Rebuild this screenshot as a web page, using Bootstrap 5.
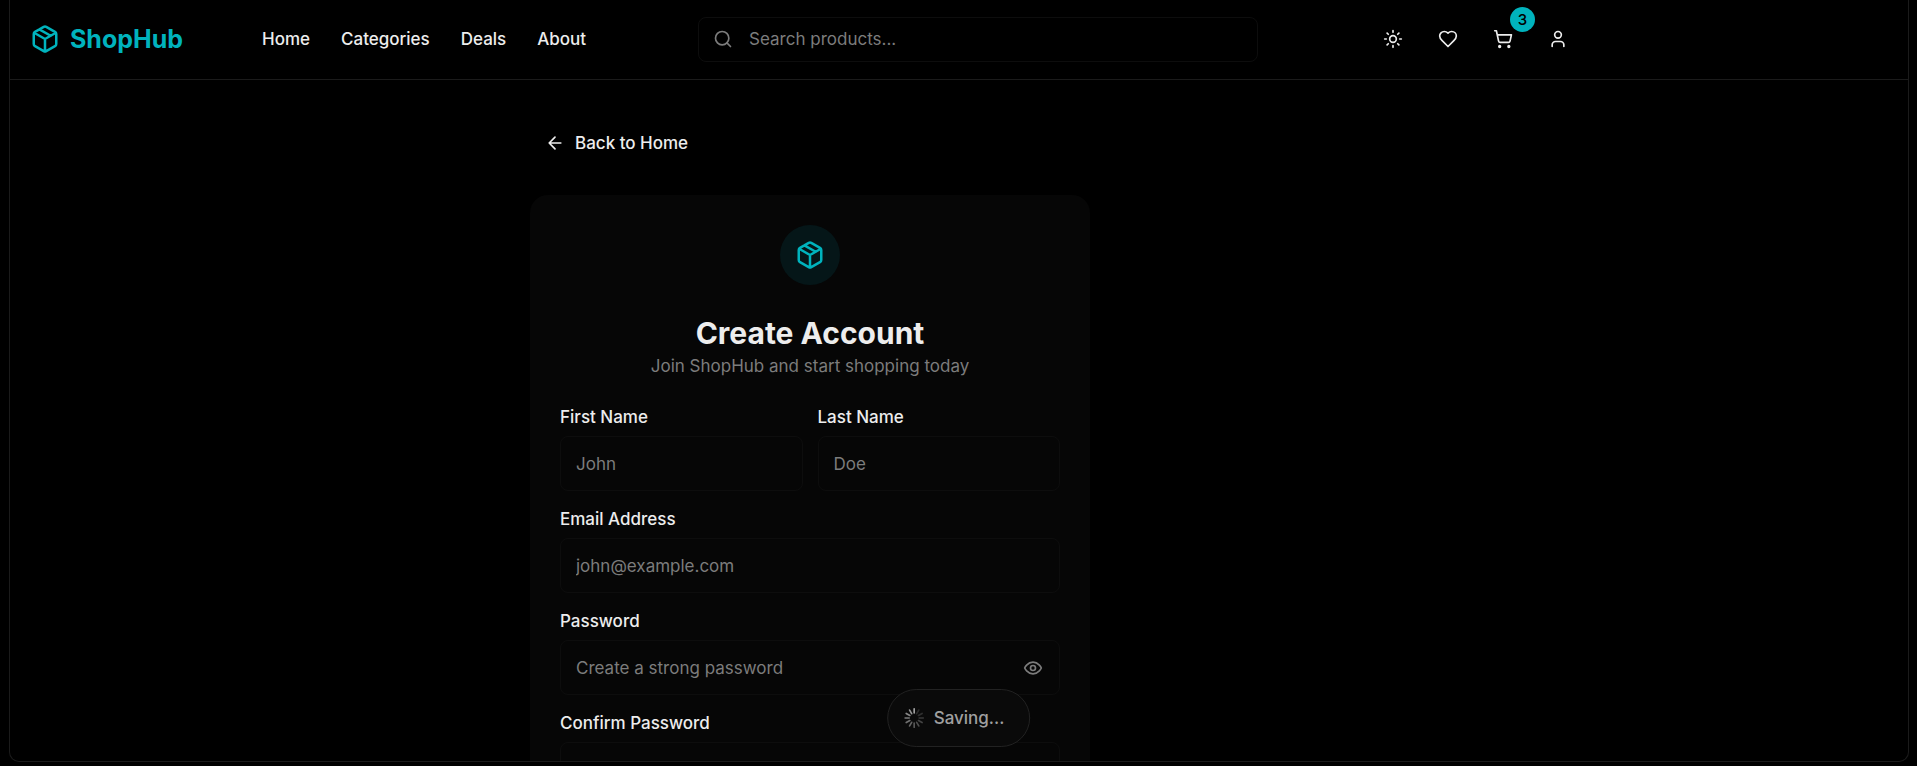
<!DOCTYPE html>
<html lang="en" data-bs-theme="dark">
<head>
<meta charset="utf-8">
<meta name="viewport" content="width=device-width, initial-scale=1">
<title>ShopHub – Create Account</title>
<link href="https://cdn.jsdelivr.net/npm/bootstrap@5.3.0/dist/css/bootstrap.min.css" rel="stylesheet">
<style>
  :root { --brand: #00b3bd; --ink: #ededed; --muted: #7c7c7c; --line: #1b1b1b; --field: #0d0d0d; }
  body { background: #000; color: var(--ink); font-family: Inter, "Liberation Sans", sans-serif; font-size: 17px; line-height: 24px; }
  svg { display: block; fill: none; stroke: currentColor; stroke-width: 2; stroke-linecap: round; stroke-linejoin: round; flex: none; }
  .app-frame { height: 100vh; padding: 0 8px 4px 9px; overflow: hidden; }
  .app-shell { border: 1px solid var(--line); border-top: 0; border-radius: 0 0 10px 10px; overflow: hidden; height: 100%; }
  .app-header { border-bottom: 1px solid var(--line); }
  .app-wide { max-width: 1600px; }
  .app-bar { height: 78px; margin-bottom: 1px; padding: 0 30px 0 20px; }
  .brand-name { font-size: 25px; font-weight: 700; color: var(--brand); }
  .brand-link { color: var(--brand); gap: 10px; width: 232px; }
  .top-links { gap: 31px; }
  .tools { gap: 10px; }
  .top-links a, .back-link { color: var(--ink); font-weight: 500; text-decoration: none; }
  .search-box { width: 560px; }
  .search-box svg { position: absolute; left: 15px; top: 12px; color: var(--muted); pointer-events: none; }
  .form-control, .form-control:focus { background: transparent; border: 1px solid var(--field); border-radius: 8px; color: var(--ink); font-size: 17px; height: 55px; padding: 0 15px; }
  .form-control::placeholder { color: var(--muted); opacity: 1; }
  .search-box .form-control { height: 45px; padding-left: 50px; }
  .icon-btn { width: 45px; height: 45px; padding: 0; border: 0; color: var(--ink); display: flex; align-items: center; justify-content: center; position: relative; }
  .cart-count { position: absolute; top: -10px; right: -10px; width: 25px; height: 25px; border-radius: 50%; background: var(--brand); color: #000; font-size: 15px; line-height: 25px; font-weight: 500; }
  .signup { width: 560px; max-width: 100%; padding-top: 40px; }
  .back-link { height: 45px; padding: 0 15px; gap: 10px; margin-bottom: 30px; }
  .panel { background: #060606; border-radius: 18px; padding: 30px; }
  .panel-mark { width: 60px; height: 60px; border-radius: 50%; background: #051618; color: var(--brand); }
  .panel h1 { color: var(--ink); font-size: 30px; line-height: 38px; font-weight: 700; margin: 29px 0 0; }
  .panel-sub { color: var(--muted); line-height: 28px; margin-bottom: 28px; }
  .fields { display: flex; flex-direction: column; gap: 19px; }
  .field-pair { gap: 15px; }
  .form-label { display: block; font-weight: 500; line-height: 18px; margin-bottom: 10px; }
  .eye-btn { position: absolute; right: 5px; top: 5px; color: var(--muted); }
  .save-pill { position: fixed; left: 50%; bottom: 19px; transform: translateX(-50%); height: 58px; padding: 0 25px 0 16px; gap: 10px; border: 1px solid #222; border-radius: 29px; background: #0a0a0a; color: #a0a0a0; font-weight: 500; white-space: nowrap; }
</style>
</head>
<body>
<div class="app-frame">
<div class="app-shell">
  <header class="app-header">
    <div class="app-wide app-bar d-flex align-items-center">
      <a href="#" class="brand-link d-flex align-items-center text-decoration-none">
        <svg width="30" height="30" viewBox="0 0 24 24"><path d="m7.5 4.27 9 5.15M21 8a2 2 0 0 0-1-1.73l-7-4a2 2 0 0 0-2 0l-7 4A2 2 0 0 0 3 8v8a2 2 0 0 0 1 1.73l7 4a2 2 0 0 0 2 0l7-4A2 2 0 0 0 21 16ZM3.3 7l8.7 5 8.7-5M12 22V12"/></svg>
        <span class="brand-name">ShopHub</span>
      </a>
      <nav class="top-links d-flex">
        <a href="#">Home</a><a href="#">Categories</a><a href="#">Deals</a><a href="#">About</a>
      </nav>
      <div class="search-box position-relative mx-auto">
        <svg width="20" height="20" viewBox="0 0 24 24"><circle cx="11" cy="11" r="8"/><path d="m21 21-4.3-4.3"/></svg>
        <input class="form-control" type="search" placeholder="Search products..." aria-label="Search products">
      </div>
      <div class="d-flex tools">
        <button class="btn icon-btn" type="button" aria-label="Theme"><svg width="20" height="20" viewBox="0 0 24 24"><circle cx="12" cy="12" r="4"/><path d="M12 2v2M12 20v2M4.93 4.93l1.41 1.41M17.66 17.66l1.41 1.41M2 12h2M20 12h2M6.34 17.66l-1.41 1.41M19.07 4.93l-1.41 1.41"/></svg></button>
        <button class="btn icon-btn" type="button" aria-label="Wishlist"><svg width="20" height="20" viewBox="0 0 24 24"><path d="M19 14c1.49-1.46 3-3.21 3-5.5A5.5 5.5 0 0 0 16.5 3c-1.76 0-3 .5-4.5 2-1.5-1.5-2.74-2-4.5-2A5.5 5.5 0 0 0 2 8.5c0 2.3 1.5 4.05 3 5.5l7 7Z"/></svg></button>
        <button class="btn icon-btn" type="button" aria-label="Cart"><svg width="20" height="20" viewBox="0 0 24 24"><circle cx="8" cy="21" r="1"/><circle cx="19" cy="21" r="1"/><path d="M2.05 2.05h2l2.66 12.42a2 2 0 0 0 2 1.58h9.78a2 2 0 0 0 1.95-1.57l1.65-7.43H5.12"/></svg><span class="cart-count">3</span></button>
        <button class="btn icon-btn" type="button" aria-label="Account"><svg width="20" height="20" viewBox="0 0 24 24"><path d="M19 21v-2a4 4 0 0 0-4-4H9a4 4 0 0 0-4 4v2"/><circle cx="12" cy="7" r="4"/></svg></button>
      </div>
    </div>
  </header>
  <main class="app-wide">
    <div class="signup mx-auto">
      <a href="#" class="back-link d-inline-flex align-items-center"><svg width="20" height="20" viewBox="0 0 24 24"><path d="m12 19-7-7 7-7M19 12H5"/></svg>Back to Home</a>
      <section class="panel">
        <div class="panel-mark d-flex align-items-center justify-content-center mx-auto"><svg width="30" height="30" viewBox="0 0 24 24"><path d="m7.5 4.27 9 5.15M21 8a2 2 0 0 0-1-1.73l-7-4a2 2 0 0 0-2 0l-7 4A2 2 0 0 0 3 8v8a2 2 0 0 0 1 1.73l7 4a2 2 0 0 0 2 0l7-4A2 2 0 0 0 21 16ZM3.3 7l8.7 5 8.7-5M12 22V12"/></svg></div>
        <h1 class="text-center">Create Account</h1>
        <p class="panel-sub text-center">Join ShopHub and start shopping today</p>
        <form class="fields">
          <div class="field-pair d-flex">
            <div class="flex-fill"><label class="form-label" for="first">First Name</label><input class="form-control" id="first" placeholder="John"></div>
            <div class="flex-fill"><label class="form-label" for="last">Last Name</label><input class="form-control" id="last" placeholder="Doe"></div>
          </div>
          <div><label class="form-label" for="email">Email Address</label><input class="form-control" id="email" type="email" placeholder="john@example.com"></div>
          <div><label class="form-label" for="pass">Password</label>
            <div class="position-relative"><input class="form-control" id="pass" type="password" placeholder="Create a strong password">
            <button class="btn icon-btn eye-btn" type="button" aria-label="Show password"><svg width="20" height="20" viewBox="0 0 24 24"><path d="M2 12s3-7 10-7 10 7 10 7-3 7-10 7-10-7-10-7Z"/><circle cx="12" cy="12" r="3"/></svg></button></div></div>
          <div><label class="form-label" for="confirm">Confirm Password</label><input class="form-control" id="confirm" type="password"></div>
        </form>
      </section>
    </div>
  </main>
</div>
</div>
<div class="save-pill d-flex align-items-center" role="status">
  <svg width="20" height="20" viewBox="0 0 24 24" stroke-width="2">
    <path d="M12 1v5"/>
    <path d="M12 1v5" transform="rotate(30 12 12)" opacity=".22"/>
    <path d="M12 1v5" transform="rotate(60 12 12)" opacity=".25"/>
    <path d="M12 1v5" transform="rotate(90 12 12)" opacity=".32"/>
    <path d="M12 1v5" transform="rotate(120 12 12)" opacity=".38"/>
    <path d="M12 1v5" transform="rotate(150 12 12)" opacity=".45"/>
    <path d="M12 1v5" transform="rotate(180 12 12)" opacity=".52"/>
    <path d="M12 1v5" transform="rotate(210 12 12)" opacity=".6"/>
    <path d="M12 1v5" transform="rotate(240 12 12)" opacity=".68"/>
    <path d="M12 1v5" transform="rotate(270 12 12)" opacity=".76"/>
    <path d="M12 1v5" transform="rotate(300 12 12)" opacity=".84"/>
    <path d="M12 1v5" transform="rotate(330 12 12)" opacity=".92"/>
  </svg>
  Saving...
</div>
<script src="https://cdn.jsdelivr.net/npm/bootstrap@5.3.0/dist/js/bootstrap.bundle.min.js"></script>
</body>
</html>
